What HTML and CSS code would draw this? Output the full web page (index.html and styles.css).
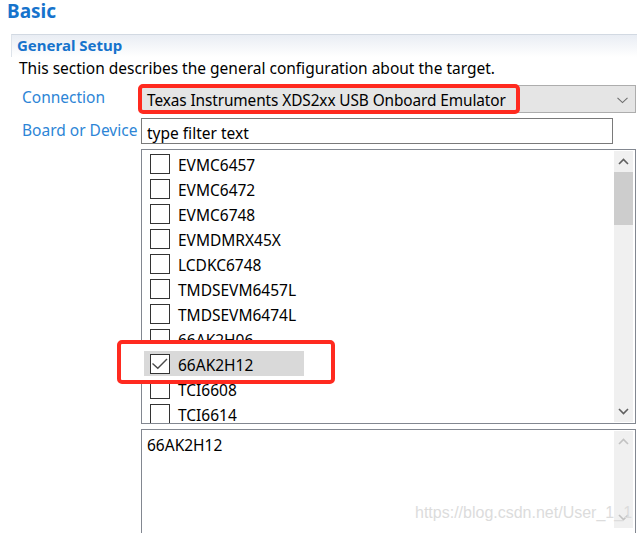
FILE: index.html
```html
<!DOCTYPE html>
<html>
<head>
<meta charset="utf-8">
<title>Basic</title>
<link rel="stylesheet" href="styles.css">
</head>
<body>
<h1 class="title">Basic</h1>
<section class="section">
  <div class="section-head">General Setup</div>
  <p class="desc">This section describes the general configuration about the target.</p>
  <div class="form">
    <div class="lbl">Connection</div>
    <div class="combo">
      <span class="combo-text">Texas Instruments XDS2xx USB Onboard Emulator</span>
      <svg class="chev" width="11" height="7" viewBox="0 0 11 7"><path d="M0.5 0.8 L5.5 5.6 L10.5 0.8" fill="none" stroke="#6d6d6d" stroke-width="1.1"/></svg>
      <div class="mark mark-combo"></div>
    </div>
    <div class="lbl">Board or Device</div>
    <div class="filter">type filter text</div>
    <div class="spacer"></div>
    <div class="list-wrap">
      <div class="list">
        <ul class="items">
          <li class="row"><span class="cb"></span><span class="name">EVMC6457</span></li>
          <li class="row"><span class="cb"></span><span class="name">EVMC6472</span></li>
          <li class="row"><span class="cb"></span><span class="name">EVMC6748</span></li>
          <li class="row"><span class="cb"></span><span class="name">EVMDMRX45X</span></li>
          <li class="row"><span class="cb"></span><span class="name">LCDKC6748</span></li>
          <li class="row"><span class="cb"></span><span class="name">TMDSEVM6457L</span></li>
          <li class="row"><span class="cb"></span><span class="name">TMDSEVM6474L</span></li>
          <li class="row"><span class="cb"></span><span class="name">66AK2H06</span></li>
          <li class="row selected"><span class="cb"><svg width="18" height="18" viewBox="0 0 18 18"><path d="M1.5 8.5 L6.8 13.2 L16 4" fill="none" stroke="#4a4a4a" stroke-width="1.4"/></svg></span><span class="name">66AK2H12</span></li>
          <li class="row"><span class="cb"></span><span class="name">TCI6608</span></li>
          <li class="row"><span class="cb"></span><span class="name">TCI6614</span></li>
        </ul>
        <div class="vscroll">
          <div class="arrow"><svg width="11" height="7" viewBox="0 0 11 7"><path d="M1 6 L5.5 1.5 L10 6" fill="none" stroke="#606060" stroke-width="1.6"/></svg></div>
          <div class="thumb"></div>
          <div class="track"></div>
          <div class="arrow"><svg width="11" height="7" viewBox="0 0 11 7"><path d="M1 1 L5.5 5.5 L10 1" fill="none" stroke="#606060" stroke-width="1.6"/></svg></div>
        </div>
      </div>
      <div class="mark mark-list"></div>
    </div>
    <div class="spacer"></div>
    <div class="descbox">
      <div class="desc-text">66AK2H12</div>
      <div class="vscroll disabled">
        <div class="arrow"><svg width="11" height="7" viewBox="0 0 11 7"><path d="M1 6 L5.5 1.5 L10 6" fill="none" stroke="#c2c2c2" stroke-width="1.6"/></svg></div>
        <div class="track"></div>
        <div class="arrow"><svg width="11" height="7" viewBox="0 0 11 7"><path d="M1 1 L5.5 5.5 L10 1" fill="none" stroke="#c2c2c2" stroke-width="1.6"/></svg></div>
      </div>
    </div>
  </div>
</section>
<div class="watermark">https://blog.csdn.net/User_1_1</div>
</body>
</html>
```

FILE: styles.css
```css
* { box-sizing: border-box; }

body {
  margin: 0;
  width: 637px;
  height: 533px;
  overflow: hidden;
  background: #fff;
  color: #000;
  font-family: "Noto Sans", "Open Sans", sans-serif;
  position: relative;
}

.title {
  margin: 0;
  height: 34px;
  padding-left: 7px;
  font-size: 19px;
  line-height: 22px;
  font-weight: 700;
  color: #1673cc;
}

.section {
  margin-left: 11px;
}

.section-head {
  height: 23px;
  padding-left: 5px;
  border-top: 1px solid #d2d9e2;
  border-left: 1px solid #dde3ea;
  background: linear-gradient(#e9edf4, #ffffff);
  font-size: 15px;
  line-height: 21px;
  font-weight: 700;
  color: #1673cc;
}

.desc {
  margin: 0;
  padding-left: 8px;
  padding-top: 1px;
  font-size: 15.5px;
  line-height: 21px;
  height: 21px;
}

.form {
  display: grid;
  grid-template-columns: 119px 495px;
  row-gap: 5px;
  margin-left: 11px;
  margin-top: 7px;
}

.lbl {
  font-size: 15.5px;
  line-height: 20px;
  padding-top: 2px;
  color: #2d85d6;
  white-space: nowrap;
}

.combo {
  position: relative;
  height: 28px;
  border: 1px solid #adadad;
  background: #e5e5e5;
  padding: 3px 7px 0 5px;
  display: flex;
  align-items: center;
  justify-content: space-between;
  font-size: 15.4px;
}

.combo-text {
  letter-spacing: -0.1px;
}

.filter {
  width: 472px;
  height: 26px;
  border: 1px solid #7a7a7a;
  padding: 3px 0 0 5px;
  font-size: 15.5px;
  line-height: 22px;
}

.mark {
  position: absolute;
  border: 4px solid #ff2a1f;
  border-radius: 5px;
}

.mark-combo {
  left: -4px;
  top: -2px;
  width: 382px;
  height: 30px;
}

.list-wrap {
  position: relative;
}

.list {
  height: 275px;
  border: 1px solid #828790;
  display: flex;
}

.items {
  list-style: none;
  margin: 0;
  padding: 1px 0 0 2px;
  flex: 1;
  overflow: hidden;
}

.row {
  width: 160px;
  height: 25px;
  padding-left: 6px;
  display: flex;
  align-items: center;
  gap: 8px;
  font-size: 15.5px;
}

.name {
  padding-top: 3px;
}

.cb {
  width: 20px;
  height: 20px;
  border: 1px solid #333;
  background: #fff;
  flex: none;
  display: flex;
  align-items: center;
  justify-content: center;
}

.selected {
  position: relative;
  z-index: 2;
  background: #d9d9d9;
}

.mark-list {
  left: -24px;
  top: 191px;
  width: 218px;
  height: 44px;
  background: #fff;
  z-index: 1;
}

.vscroll {
  width: 19px;
  margin: 1px 2px 1px 0;
  background: #f0f0f0;
  display: flex;
  flex-direction: column;
}

.arrow {
  height: 21px;
  display: flex;
  align-items: center;
  justify-content: center;
  flex: none;
}

.thumb {
  height: 53px;
  background: #cdcdcd;
  flex: none;
}

.track {
  flex: 1;
}

.descbox {
  height: 110px;
  border: 1px solid #828790;
  display: flex;
}

.desc-text {
  flex: 1;
  padding: 5px 5px;
  font-size: 15.5px;
  line-height: 21px;
}

.vscroll.disabled {
  margin-bottom: 10px;
}

.watermark {
  position: absolute;
  left: 415px;
  top: 504px;
  font-family: "Liberation Sans", Arial, sans-serif;
  font-size: 16px;
  color: #dcdcdc;
  white-space: nowrap;
}
```
